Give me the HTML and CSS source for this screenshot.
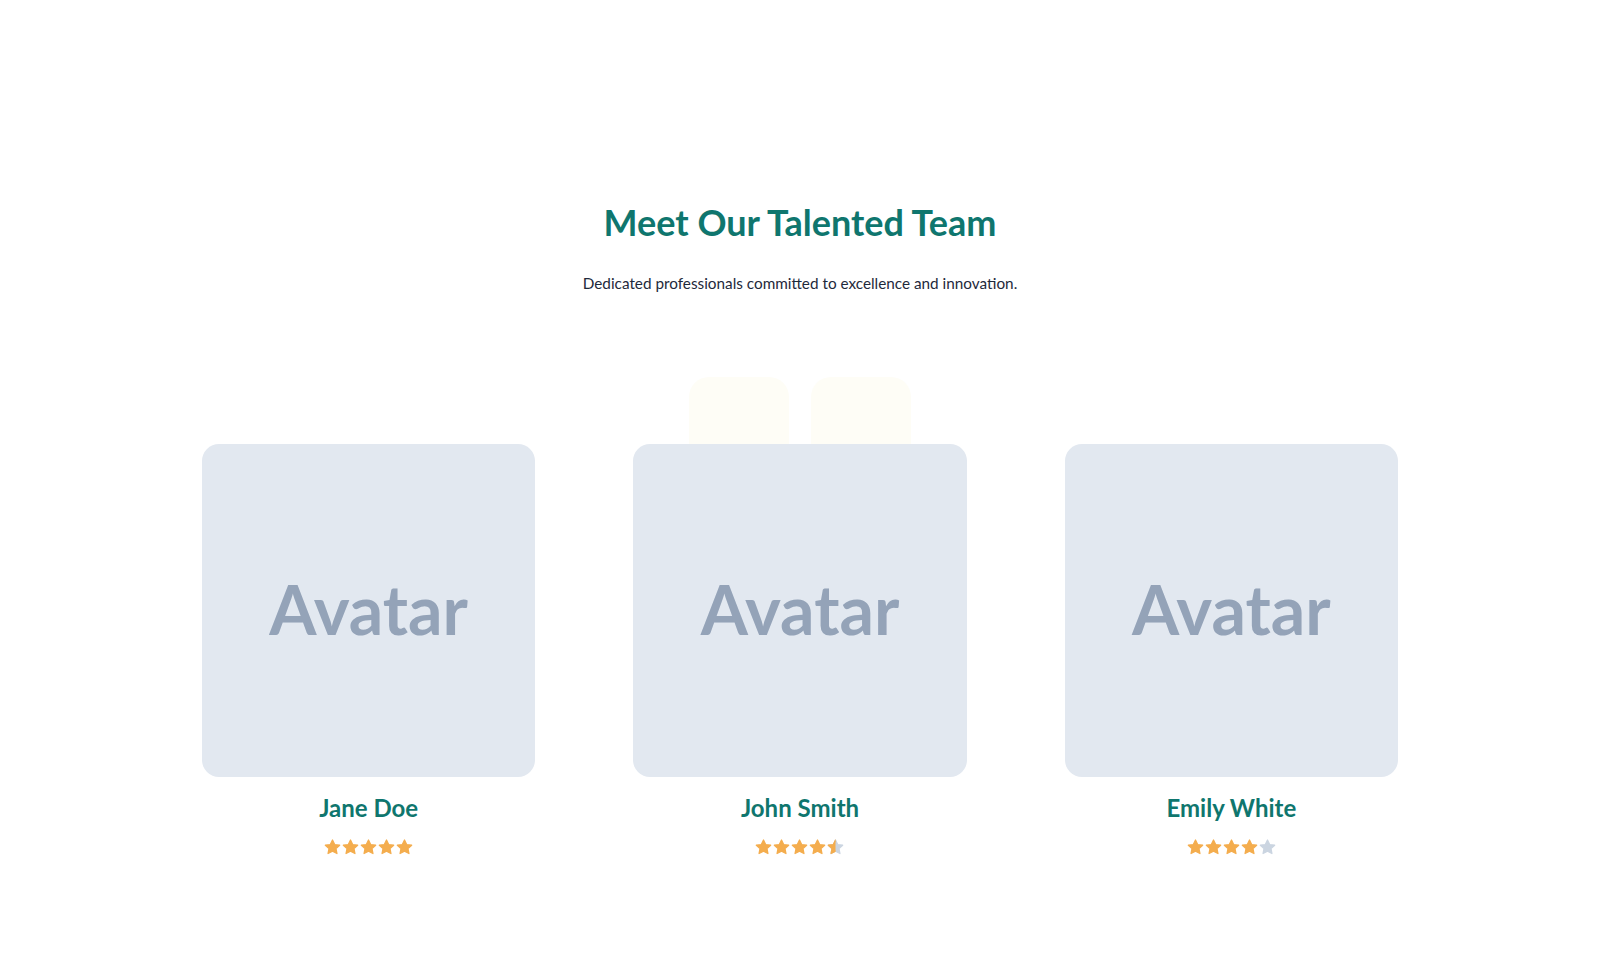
FILE: index.html
```html
<!DOCTYPE html>
<html lang="en">
<head>
<meta charset="utf-8">
<title>Meet Our Talented Team</title>
<link rel="stylesheet" href="styles.css">
</head>
<body>
<svg class="defs" width="0" height="0" aria-hidden="true">
  <defs>
    <path id="star" d="M8 0.9l2.05 4.3 4.7 0.6-3.45 3.25 0.88 4.65L8 11.45 3.82 13.7l0.88-4.65L1.25 5.8l4.7-0.6z" stroke-linejoin="round" stroke-width="1.2"/>
    <clipPath id="half"><rect x="0" y="0" width="8" height="16"/></clipPath>
  </defs>
</svg>

<section class="team">
  <header class="team-head">
    <h1 class="team-title">Meet Our Talented Team</h1>
    <p class="team-lead">Dedicated professionals committed to excellence and innovation.</p>
  </header>

  <div class="team-grid">
    <span class="deco deco-left"></span>
    <span class="deco deco-right"></span>

    <article class="member">
      <div class="avatar"><span>Avatar</span></div>
      <h2 class="member-name">Jane Doe</h2>
      <div class="stars">
        <svg class="star on" viewBox="0 0 16 16"><use href="#star"/></svg>
        <svg class="star on" viewBox="0 0 16 16"><use href="#star"/></svg>
        <svg class="star on" viewBox="0 0 16 16"><use href="#star"/></svg>
        <svg class="star on" viewBox="0 0 16 16"><use href="#star"/></svg>
        <svg class="star on" viewBox="0 0 16 16"><use href="#star"/></svg>
      </div>
    </article>

    <article class="member">
      <div class="avatar"><span>Avatar</span></div>
      <h2 class="member-name">John Smith</h2>
      <div class="stars">
        <svg class="star on" viewBox="0 0 16 16"><use href="#star"/></svg>
        <svg class="star on" viewBox="0 0 16 16"><use href="#star"/></svg>
        <svg class="star on" viewBox="0 0 16 16"><use href="#star"/></svg>
        <svg class="star on" viewBox="0 0 16 16"><use href="#star"/></svg>
        <svg class="star off" viewBox="0 0 16 16"><use href="#star"/><use class="half-fill" href="#star" clip-path="url(#half)"/></svg>
      </div>
    </article>

    <article class="member">
      <div class="avatar"><span>Avatar</span></div>
      <h2 class="member-name">Emily White</h2>
      <div class="stars">
        <svg class="star on" viewBox="0 0 16 16"><use href="#star"/></svg>
        <svg class="star on" viewBox="0 0 16 16"><use href="#star"/></svg>
        <svg class="star on" viewBox="0 0 16 16"><use href="#star"/></svg>
        <svg class="star on" viewBox="0 0 16 16"><use href="#star"/></svg>
        <svg class="star off" viewBox="0 0 16 16"><use href="#star"/></svg>
      </div>
    </article>
  </div>
</section>
</body>
</html>
```

FILE: styles.css
```css
* {
  box-sizing: border-box;
}

html,
body {
  margin: 0;
  padding: 0;
  background: #ffffff;
}

body {
  font-family: "Lato", "Noto Sans", sans-serif;
  color: #1e293b;
}

.defs {
  position: absolute;
  width: 0;
  height: 0;
  overflow: hidden;
}

.team {
  padding-top: 200px;
}

.team-head {
  text-align: center;
}

.team-title {
  margin: 0;
  font-size: 36px;
  line-height: 44px;
  font-weight: 700;
  color: #0f766e;
}

.team-lead {
  margin: 28px 0 0;
  font-size: 15.3px;
  line-height: 22px;
  color: #1e293b;
}

.team-grid {
  position: relative;
  width: 1196px;
  margin: 150px auto 0;
  display: grid;
  grid-template-columns: repeat(3, 1fr);
  column-gap: 98px;
}

/* soft decorative tiles peeking out behind the middle card */
.deco {
  position: absolute;
  top: -67px;
  width: 100px;
  height: 140px;
  border-radius: 20px;
  background: #fefdf6;
  z-index: 0;
}

.deco-left {
  left: 487px;
}

.deco-right {
  left: 609px;
}

.member {
  position: relative;
  z-index: 1;
  display: flex;
  flex-direction: column;
  align-items: center;
}

.avatar {
  width: 100%;
  aspect-ratio: 1 / 1;
  border-radius: 17px;
  background: #e2e8f0;
  display: flex;
  align-items: center;
  justify-content: center;
}

.avatar span {
  font-family: "Lato", sans-serif;
  font-weight: 700;
  font-size: 68px;
  line-height: 1;
  color: #94a3b8;
  margin-top: -3px;
}

.member-name {
  margin: 15px 0 0;
  font-size: 24px;
  line-height: 32px;
  font-weight: 700;
  color: #0f766e;
}

.stars {
  margin-top: 15px;
  display: flex;
  gap: 1px;
}

.star {
  width: 17px;
  height: 17px;
  display: block;
}

.star.on use {
  fill: #f4ad4e;
  stroke: #f4ad4e;
}

.star.off use {
  fill: #cbd5e1;
  stroke: #cbd5e1;
}

.star.off use.half-fill {
  fill: #f4ad4e;
  stroke: #f4ad4e;
}
```
